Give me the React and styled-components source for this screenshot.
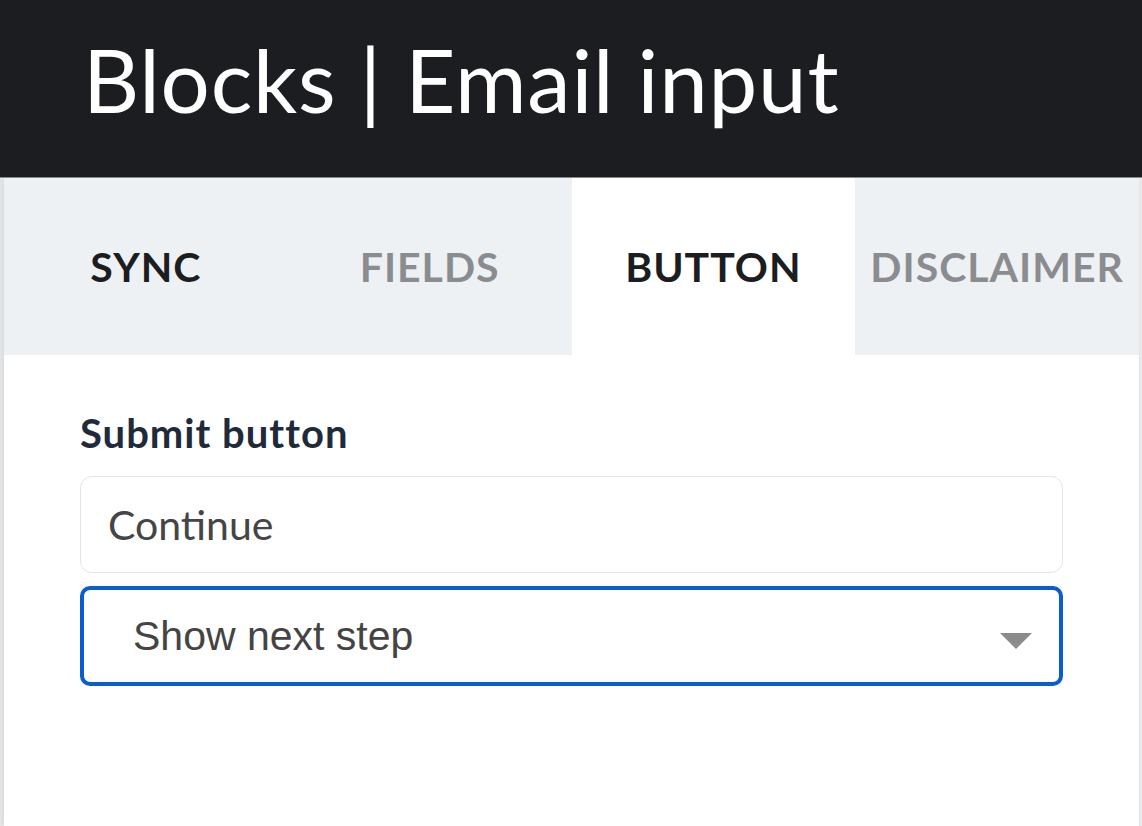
import React, { useState } from "react"
import styled, { createGlobalStyle } from "styled-components"

const GlobalStyle = createGlobalStyle`
  html, body {
    margin: 0;
    padding: 0;
    background: #e9eaec;
  }
  body {
    font-family: Lato, "Open Sans", sans-serif;
  }
`

const Page = styled.div`
  width: 1142px;
  height: 826px;
  display: flex;
  flex-direction: column;
  overflow: hidden;
`

const Header = styled.header`
  height: 178px;
  flex-shrink: 0;
  background: #1c1d21;
  border-bottom: 1px solid #8b8d92;
  box-sizing: border-box;
  display: flex;
  align-items: center;
  padding-left: 83px;
`

const Title = styled.h1`
  margin: 0 0 19px;
  color: #ffffff;
  font-family: Lato, "Open Sans", sans-serif;
  font-weight: 400;
  font-size: 87px;
  letter-spacing: 0.8px;
  line-height: 1;
`

const Panel = styled.div`
  flex: 1;
  margin-left: 4px;
  width: 1135px;
  background: #ffffff;
  border-right: 1px solid #e4e5e7;
  box-shadow: -3px 0 4px rgba(0, 0, 0, 0.06);
  display: flex;
  flex-direction: column;
`

const Tabs = styled.nav`
  display: grid;
  grid-template-columns: repeat(4, 1fr);
  height: 177px;
  background: #eef1f4;
`

const Tab = styled.button`
  border: none;
  margin: 0;
  padding: 0;
  background: ${p => (p.active ? "#ffffff" : "transparent")};
  color: ${p => (p.active || p.done ? "#1c1d21" : "#8b8c90")};
  font-family: Lato, "Open Sans", sans-serif;
  font-weight: 700;
  font-size: 41px;
  letter-spacing: 1px;
  text-transform: uppercase;
  cursor: pointer;
  display: flex;
  align-items: center;
  justify-content: center;
`

const Body = styled.section`
  padding: 58px 76px 0 76px;
  display: flex;
  flex-direction: column;
`

const Label = styled.label`
  color: #1f2b3a;
  font-family: Lato, "Open Sans", sans-serif;
  font-weight: 700;
  font-size: 40px;
  letter-spacing: 1px;
  line-height: 1;
  margin-bottom: 23px;
`

const TextInput = styled.input`
  box-sizing: border-box;
  width: 983px;
  height: 97px;
  border: 1px solid #e3e4e6;
  border-radius: 12px;
  padding: 0 27px;
  font-family: Lato, "Open Sans", sans-serif;
  font-size: 41px;
  color: #444547;
  outline: none;
  background: #fff;
`

const SelectWrap = styled.div`
  position: relative;
  margin-top: 13px;
  width: 983px;
`

const Select = styled.select`
  box-sizing: border-box;
  width: 100%;
  height: 100px;
  appearance: none;
  border: 4px solid #0b5ccc;
  border-radius: 10px;
  background: #fff;
  padding: 0 0 0 49px;
  font-family: "Liberation Sans", Arial, sans-serif;
  font-size: 41px;
  color: #444;
  outline: none;
`

const Caret = styled.span`
  position: absolute;
  right: 31px;
  top: 47px;
  width: 0;
  height: 0;
  border-left: 16px solid transparent;
  border-right: 16px solid transparent;
  border-top: 16px solid #8c8c8c;
  pointer-events: none;
`

const tabs = ["Sync", "Fields", "Button", "Disclaimer"]

export default function App() {
  const [active, setActive] = useState("Button")
  return (
    <Page>
      <GlobalStyle />
      <Header>
        <Title>Blocks | Email input</Title>
      </Header>
      <Panel>
        <Tabs>
          {tabs.map(t => (
            <Tab
              key={t}
              active={t === active}
              done={t === "Sync"}
              onClick={() => setActive(t)}
            >
              {t}
            </Tab>
          ))}
        </Tabs>
        <Body>
          <Label htmlFor="submit-text">Submit button</Label>
          <TextInput id="submit-text" defaultValue="Continue" />
          <SelectWrap>
            <Select defaultValue="next">
              <option value="next">Show next step</option>
              <option value="url">Go to URL</option>
            </Select>
            <Caret />
          </SelectWrap>
        </Body>
      </Panel>
    </Page>
  )
}
